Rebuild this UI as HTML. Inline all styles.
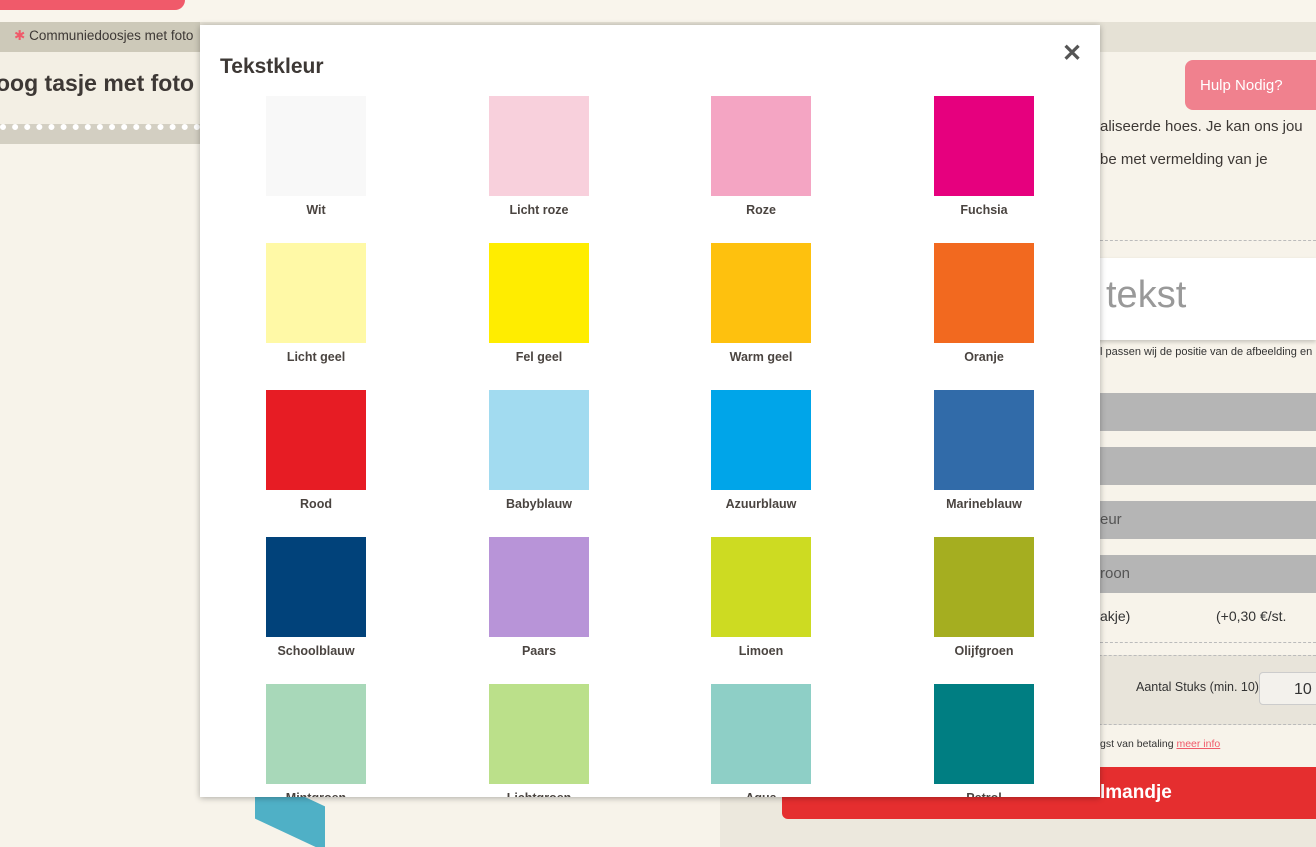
<!DOCTYPE html>
<html><head><meta charset="utf-8"><style>
html,body{margin:0;width:1316px;height:847px;overflow:hidden}
body{position:relative;font-family:"Liberation Sans",sans-serif;background:#f7f3ea;}
.a{position:absolute}
.sw{position:absolute;width:100px;height:100px}
.lb{position:absolute;width:160px;text-align:center;font-size:12.5px;font-weight:bold;color:#4a4440}
.bar{position:absolute;left:780px;width:536px;height:38px;background:#b5b5b5;color:#555;font-size:15px;line-height:38px}
</style></head><body>
<div class="a" style="left:0;top:0;width:1316px;height:25px;background:#f9f5ec"></div>
<div class="a" style="left:0;top:0;width:185px;height:10px;background:#f05a6a;border-radius:0 0 10px 0"></div>
<div class="a" style="left:0;top:22px;width:1316px;height:30px;background:#e5e1d5"></div>
<div class="a" style="left:0;top:22px;width:200px;height:30px;background:#cdc9b9"></div>
<div class="a" style="left:14px;top:28px;font-size:13.5px;color:#3d3835"><span style="color:#f05a6a">✱</span> Communiedoosjes met foto</div>
<div class="a" style="left:0;top:52px;width:200px;height:92px;background:#f3efe4"></div>
<div class="a" style="left:-4px;top:70px;font-size:23px;font-weight:bold;color:#3d3835">oog tasje met foto</div>
<div class="a" style="left:0;top:124px;width:200px;height:20px;background:#d3cfc2;border-top:6px dotted #fff;box-sizing:border-box"></div>
<div class="a" style="left:1185px;top:60px;width:131px;height:50px;background:#f0818e;border-radius:8px 0 0 8px;color:#fff;font-size:15px;line-height:52px;padding-left:15px;box-sizing:border-box">Hulp Nodig?</div>
<div class="a" style="left:1100px;top:110px;font-size:15px;color:#3d3835;line-height:33px;white-space:nowrap">aliseerde hoes. Je kan ons jou<br>be met vermelding van je</div>
<div class="a" style="left:1100px;top:240px;width:216px;border-top:1px dashed #bbb"></div>
<div class="a" style="left:780px;top:258px;width:536px;height:82px;background:#fff;box-shadow:0 2px 4px rgba(0,0,0,.2)"></div>
<div class="a" style="left:1106px;top:274px;font-size:38px;color:#999">tekst</div>
<div class="a" style="left:1100px;top:346px;font-size:11px;color:#333;white-space:nowrap">l passen wij de positie van de afbeelding en</div>
<div class="bar" style="top:393px"></div>
<div class="bar" style="top:447px"></div>
<div class="bar" style="top:501px"><span style="margin-left:320px">eur</span></div>
<div class="bar" style="top:555px"><span style="margin-left:320px">roon</span></div>
<div class="a" style="left:1100px;top:608px;font-size:14px;color:#333">akje)</div>
<div class="a" style="left:1216px;top:608px;font-size:14px;color:#333;white-space:nowrap">(+0,30 €/st.</div>
<div class="a" style="left:1100px;top:642px;width:216px;border-top:1px dashed #bbb"></div>
<div class="a" style="left:720px;top:655px;width:596px;height:68px;background:#e8e4da;border-top:1px dashed #bbb;border-bottom:1px dashed #bbb"></div>
<div class="a" style="left:1136px;top:680px;font-size:12.5px;color:#333">Aantal Stuks (min. 10)</div>
<div class="a" style="left:1259px;top:672px;width:70px;height:33px;background:#f3f1ec;border:1px solid #ccc;border-radius:4px;font-size:16px;line-height:33px;padding-left:34px;box-sizing:border-box;color:#333">10</div>
<div class="a" style="left:1100px;top:738px;font-size:10.5px;color:#333;white-space:nowrap">gst van betaling <span style="color:#f05a6a;text-decoration:underline">meer info</span></div>
<div class="a" style="left:720px;top:797px;width:596px;height:50px;background:#ece8dd"></div>
<div class="a" style="left:782px;top:767px;width:534px;height:52px;background:#e52e2f;border-radius:6px 0 0 6px;color:#fff;font-size:19px;font-weight:bold;line-height:52px;padding-left:318px;box-sizing:border-box">lmandje</div>
<div class="a" style="left:255px;top:790px;width:70px;height:45px;background:#4fb0c6;transform:skewY(25deg)"></div>
<div class="a" style="left:200px;top:25px;width:900px;height:772px;background:#fff;box-shadow:0 1px 6px rgba(0,0,0,.3);overflow:hidden">
<div class="a" style="left:20px;top:30px;font-size:21px;font-weight:bold;color:#3d3835">Tekstkleur</div>
<div class="a" style="left:862px;top:14px;font-size:24px;font-weight:bold;color:#555">✕</div>
<div id="g"></div>
</div>
<script>
var c=[["#f8f8f8","Wit"],["#f8d0dc","Licht roze"],["#f4a5c3","Roze"],["#e6007e","Fuchsia"],
["#fff9a6","Licht geel"],["#ffed00","Fel geel"],["#fec10e","Warm geel"],["#f2691f","Oranje"],
["#e71c24","Rood"],["#a2dbf0","Babyblauw"],["#00a5e9","Azuurblauw"],["#316ba9","Marineblauw"],
["#01427a","Schoolblauw"],["#b894d8","Paars"],["#cddb22","Limoen"],["#a5ae20","Olijfgroen"],
["#a8d8b9","Mintgroen"],["#bbe08a","Lichtgroen"],["#8ecfc6","Aqua"],["#007e82","Petrol"]];
var xs=[66,289,511,734],h="";
c.forEach(function(v,i){var x=xs[i%4],y=71+147*Math.floor(i/4);
h+='<div class="sw" style="left:'+x+'px;top:'+y+'px;background:'+v[0]+'"></div>';
h+='<div class="lb" style="left:'+(x-30)+'px;top:'+(y+107)+'px">'+v[1]+'</div>';});
document.getElementById("g").innerHTML=h;
</script>
</body></html>
